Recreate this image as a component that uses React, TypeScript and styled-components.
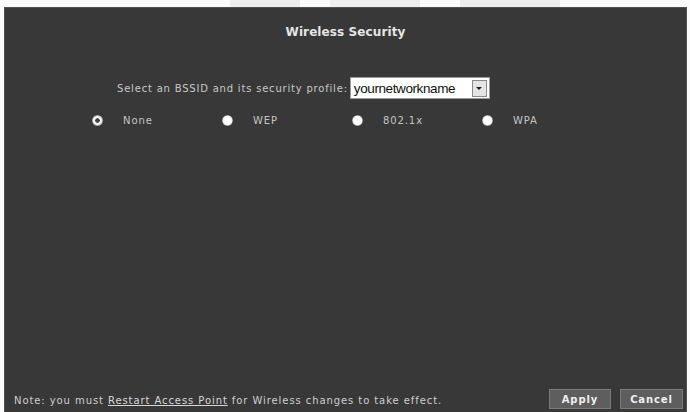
import React, { useState } from "react";
import styled, { createGlobalStyle } from "styled-components";

const Global = createGlobalStyle`
  html, body { margin: 0; padding: 0; background: #fbfbfb; }
  body { width: 690px; height: 412px; overflow: hidden; font-family: "DejaVu Sans", Verdana, sans-serif; }
`;

const Page = styled.div`
  width: 690px;
  height: 412px;
  padding: 7px 3px 0 4px;
  box-sizing: border-box;
  display: flex;
  background: linear-gradient(90deg, #fbfbfb 0 230px, #eeeeee 230px 300px, #fbfbfb 300px 330px, #efefef 330px 420px, #fbfbfb 420px 460px, #eeeeee 460px 560px, #fbfbfb 560px);
`;

const Panel = styled.div`
  flex: 1;
  background: #383838;
  border: 1px solid #505050;
  border-bottom: none;
  display: flex;
  flex-direction: column;
  color: #d4d4d4;
`;

const Title = styled.h1`
  margin: 17px 0 0;
  font-size: 12px;
  font-weight: bold;
  line-height: 14px;
  text-align: center;
  color: #e6e6e6;
  letter-spacing: 0.1px;
`;

const SelectRow = styled.div`
  display: flex;
  align-items: center;
  gap: 2px;
  margin-top: 38px;
  padding-left: 112px;
`;

const Label = styled.span`
  font-size: 10px;
  letter-spacing: 0.8px;
  color: #c8c8c8;
`;

const SelectBox = styled.div`
  width: 133px;
  height: 20px;
  background: #fff;
  border: 1px solid #9a9a9a;
  display: flex;
  align-items: center;
  justify-content: space-between;
  padding: 0 2px 0 3px;
  box-sizing: content-box;
  font-family: "Liberation Sans", Arial, sans-serif;
  font-size: 13.5px;
  color: #111;
  letter-spacing: -0.4px;
`;

const ArrowBtn = styled.span`
  width: 13px;
  height: 15px;
  background: #e4e4e4;
  border: 1px solid #8a8a8a;
  display: flex;
  align-items: center;
  justify-content: center;
  &::after {
    content: "";
    border-left: 3px solid transparent;
    border-right: 3px solid transparent;
    border-top: 3px solid #222;
  }
`;

const RadioRow = styled.div`
  display: grid;
  grid-template-columns: repeat(4, 130px);
  margin-top: 16px;
  padding-left: 87px;
`;

const RadioItem = styled.label`
  display: flex;
  align-items: center;
  gap: 20px;
  font-size: 10px;
  letter-spacing: 0.9px;
  color: #c4c4c4;
  cursor: pointer;
`;

const RadioDot = styled.span<{ $on: boolean }>`
  width: 11px;
  height: 11px;
  border-radius: 50%;
  background: ${(p) =>
    p.$on
      ? "radial-gradient(circle, #444 0 2px, #f4f4f4 2.5px 4px, rgba(255,255,255,0.4) 5.5px)"
      : "radial-gradient(circle, #ffffff 0 3.5px, #eeeeee 4.5px, rgba(255,255,255,0.3) 5.5px)"};
`;

const Spacer = styled.div`
  flex: 1;
`;

const Footer = styled.div`
  display: flex;
  align-items: center;
  padding: 0 3px 3px 9px;
`;

const Note = styled.span`
  flex: 1;
  font-size: 10px;
  letter-spacing: 0.92px;
  color: #cfcfcf;
  padding-top: 2px;
`;

const Link = styled.a`
  color: #d8d8d8;
  text-decoration: underline;
`;

const Buttons = styled.div`
  display: flex;
  gap: 9px;
`;

const Button = styled.button<{ $w: number }>`
  width: ${(p) => p.$w}px;
  height: 20px;
  background: #5e5e5e;
  border: 1px solid #7a7a7a;
  color: #f0f0f0;
  font-family: "DejaVu Sans", Verdana, sans-serif;
  font-size: 10px;
  font-weight: bold;
  letter-spacing: 0.9px;
  padding: 0;
`;

const options = ["None", "WEP", "802.1x", "WPA"];

export default function App() {
  const [sel, setSel] = useState("None");
  return (
    <>
      <Global />
      <Page>
        <Panel>
          <Title>Wireless Security</Title>
          <SelectRow>
            <Label>Select an BSSID and its security profile:</Label>
            <SelectBox>
              <span>yournetworkname</span>
              <ArrowBtn />
            </SelectBox>
          </SelectRow>
          <RadioRow>
            {options.map((o) => (
              <RadioItem key={o} onClick={() => setSel(o)}>
                <RadioDot $on={sel === o} />
                {o}
              </RadioItem>
            ))}
          </RadioRow>
          <Spacer />
          <Footer>
            <Note>
              Note: you must <Link>Restart Access Point</Link> for Wireless changes to take effect.
            </Note>
            <Buttons>
              <Button $w={62}>Apply</Button>
              <Button $w={63}>Cancel</Button>
            </Buttons>
          </Footer>
        </Panel>
      </Page>
    </>
  );
}
